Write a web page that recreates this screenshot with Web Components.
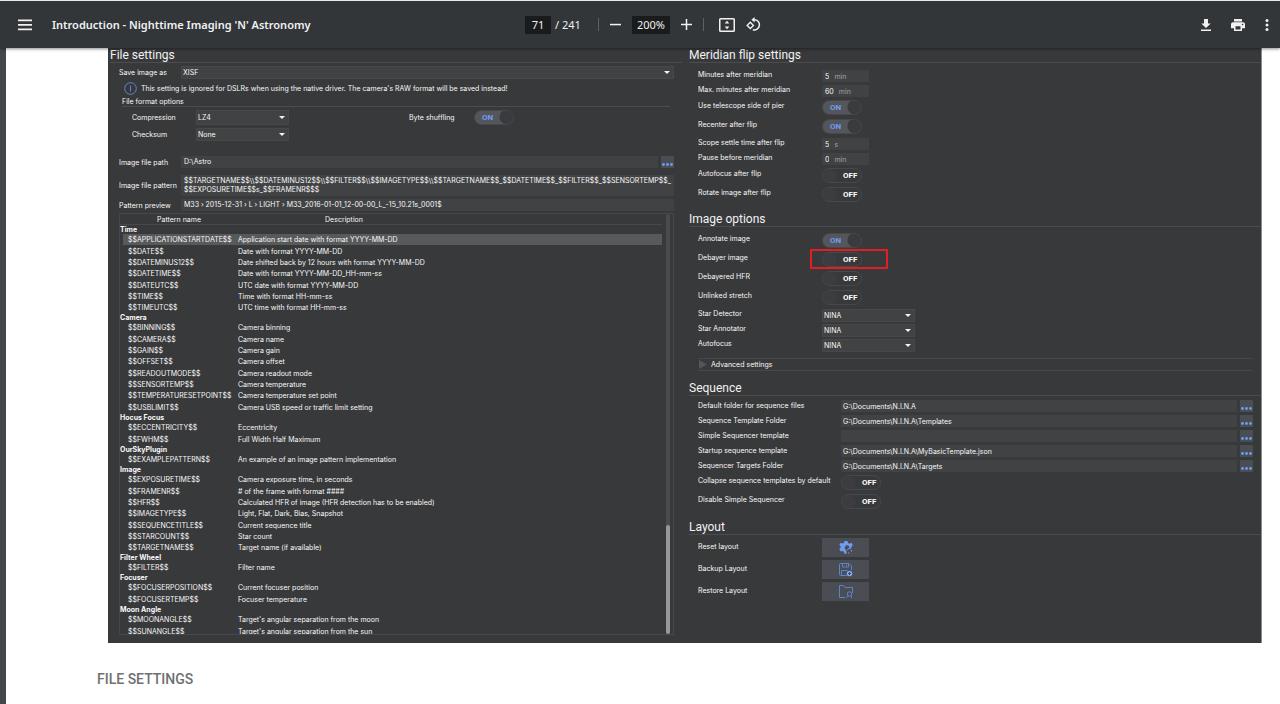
<!DOCTYPE html>
<html lang="en">
<head>
<meta charset="utf-8">
<title>Introduction - Nighttime Imaging 'N' Astronomy</title>
<style>
  html { background: #42474a; }
  body { margin: 0; font-family: Roboto, sans-serif; min-height: 100vh; }
</style>
</head>
<body>
<pdf-viewer></pdf-viewer>

<script>
const controlCss = `
  *, *::before, *::after { box-sizing: border-box; }
  input, select, textarea, button {
    font: inherit; color: inherit; border: 0; border-radius: 0; margin: 0; padding: 0;
    outline: 0; background: none; appearance: none; min-width: 0;
  }
  .box { background: #414244; }
  select.box { height: 13px; border: 1px solid #47484a; padding: 0 2px 0 1px; }
  .drop { display: grid; align-items: center; }
  .drop select { grid-area: 1 / 1; width: 100%; }
  .drop::after {
    content: ""; grid-area: 1 / 1; justify-self: end; margin-right: 4px; pointer-events: none;
    border: 3px solid transparent; border-top-color: #f2f2f2; border-bottom: 0;
  }
  .switch { display: grid; width: 40px; height: 15px; align-items: center; font: bold 8px/15px Roboto, sans-serif; }
  .switch input { grid-area: 1 / 1; width: 40px; height: 15px; border: 1px solid #47484c; border-radius: 8px;
    background: radial-gradient(circle at 7px 7px, #3c3d41 6px, transparent 7px); }
  .switch input:checked { background: radial-gradient(circle at 32px 6px, #3a3b3e 7px, #54565b 8px); }
  .switch span { grid-area: 1 / 1; pointer-events: none; padding-left: 21px; color: #fff; }
  .switch input:checked + span { padding-left: 8px; color: #6f9df2; }
  .more { width: 13px; height: 12px; background: #4b4d54; display: flex; align-items: end; justify-content: center; padding-bottom: 2px; }
`;
const dots = `<svg width="11" height="3" viewBox="0 0 11 3" fill="#6f9df2"><circle cx="1.5" cy="1.5" r="1.4"/><circle cx="5.5" cy="1.5" r="1.4"/><circle cx="9.5" cy="1.5" r="1.4"/></svg>`;

function define(name, render) {
  customElements.define(name, class extends HTMLElement {
    connectedCallback() {
      if (this.shadowRoot) return;
      this.attachShadow({ mode: 'open' }).innerHTML = render(this);
    }
  });
}

/* ---------- viewer toolbar ---------- */
define('viewer-toolbar', () => `
<style>
  :host { display: grid; grid-template-columns: 1fr auto 1fr; align-items: center; height: 48px;
    box-sizing: border-box; padding: 0 10px 0 18px; border-top: 1px solid #e8eaea; background: #323639;
    color: #f1f1f1; font-family: "Noto Sans", sans-serif; font-size: 11px; position: relative; z-index: 1;
    box-shadow: 0 1px 3px rgba(0,0,0,.45); }
  div { display: flex; align-items: center; }
  .left { gap: 20px; }
  .center { margin-right: 2px; }
  .right { justify-content: flex-end; gap: 14px; }
  .right :last-child { margin-left: 2px; }
  h1 { margin: 0; font: 600 11px/18px "Noto Sans", sans-serif; white-space: nowrap; }
  button { all: unset; display: flex; }
  svg { display: block; fill: #f1f1f1; }
  input { box-sizing: border-box; height: 18px; border: 0; padding: 0; background: #191b1c; color: inherit;
    font: inherit; text-align: center; }
  .page { width: 26px; } .zoom { width: 38px; }
  hr { border: 0; margin: 0; width: 1px; height: 13px; background: #5d6164; }
</style>
<div class="left">
  <button aria-label="Menu"><svg width="14" height="12" viewBox="0 0 14 12"><path d="M0 .5h14v1.8H0zM0 5h14v1.8H0zM0 9.500h14v1.800H0z"/></svg></button>
  <h1>Introduction - Nighttime Imaging 'N' Astronomy</h1>
</div>
<div class="center">
  <input class="page" aria-label="Page" value="71"><span style="margin:0 17px 0 4px">/ 241</span>
  <hr>
  <button aria-label="Zoom out" style="margin:0 11px"><svg width="11" height="11" viewBox="0 0 11 11"><path d="M0 4.800h11v1.500H0z"/></svg></button>
  <input class="zoom" aria-label="Zoom" value="200%">
  <button aria-label="Zoom in" style="margin:0 11px"><svg width="11" height="11" viewBox="0 0 11 11"><path d="M0 4.800h4.750V0h1.500v4.800H11v1.500H6.250V11h-1.500V6.300H0z"/></svg></button>
  <hr>
  <button aria-label="Fit to page" style="margin:0 11px 0 15px"><svg width="16" height="14" viewBox="0 0 16 14"><path d="M1.500 0h13A1.500 1.500 0 0 1 16 1.500v11a1.500 1.500 0 0 1-1.500 1.500h-13A1.500 1.500 0 0 1 0 12.500v-11A1.500 1.500 0 0 1 1.500 0zm0 1.500v11h13v-11zM8 2.800l2.300 2.700H5.700zM8 11.200L5.700 8.500h4.600z" fill-rule="evenodd"/></svg></button>
  <button aria-label="Rotate"><svg width="15" height="15" viewBox="0 0 15 15"><path fill-rule="evenodd" d="M4.300 4.300L.2 8.400l4.100 4 4.100-4zM2.100 8.400l2.200-2.200 2.200 2.200-2.200 2.100z"/><path d="M8.600 0L5.400 2.800l3.200 2.700z"/><path d="M8 2.750A5.100 5.100 0 1 1 6.800 12.700" fill="none" stroke="#f1f1f1" stroke-width="1.500"/></svg></button>
</div>
<div class="right">
  <button aria-label="Download"><svg width="16" height="16" viewBox="0 0 16 16"><path d="M6 2h4v4.500h2.700L8 11 3.300 6.500H6zM3 12.500h10V14H3z"/></svg></button>
  <button aria-label="Print"><svg width="16" height="16" viewBox="0 0 16 16"><path d="M4 2h8v2.500H4zM3 5.200h10a2 2 0 0 1 2 2v4h-3V14H4v-2.800H1v-4a2 2 0 0 1 2-2zM5.500 9.200v3.300h5V9.200zm7-2.500a.75.75 0 1 0 .1 0z" fill-rule="evenodd"/></svg></button>
  <button aria-label="More"><svg width="6" height="14" viewBox="0 0 6 14"><circle cx="3" cy="2.500" r="1.500"/><circle cx="3" cy="7" r="1.500"/><circle cx="3" cy="11.500" r="1.500"/></svg></button>
</div>`);

/* ---------- titled group of settings ---------- */
define('settings-section', el => `
<style>
  :host { display: block; }
  h2 { margin: 0; box-sizing: border-box; height: 15px; border-bottom: 1px solid #4b4c4e;
    font: 400 12px/15px Roboto, sans-serif; color: #f2f2f2; white-space: nowrap; }
  .body { padding-top: var(--inset, 4px); }
</style>
<h2>${el.getAttribute('heading')}</h2><div class="body"><slot></slot></div>`);

/* ---------- one labelled setting ---------- */
const icons = {
  reset: `<path fill="#6f9df2" fill-rule="evenodd" d="M5.500 0h3l.5 2 1.600.8 1.800-1 1.400 2.100-1.200 1.500.2 1.100-2.300.4A2.400 2.400 0 1 0 7.300 9l.3 3.700H5.500L5 10.700l-1.500-.8-1.800.6L.3 8.100 1.600 6.800V5.300L.3 4l1.400-2.300 1.800.8L5 1.700z"/><path fill="none" stroke="#6f9df2" d="M8.500 9a2 2 0 0 1 3.500-1M9 11.500l1.200 1M12.500 9v1.500"/>`,
  backup: `<g fill="none" stroke="#5d83c9"><path d="M8 12.500H1.500a1 1 0 0 1-1-1v-10a1 1 0 0 1 1-1H10L12.500 3v4M3.500.5v3.500h6V.5M2.500 12V7.500h6M7.500 1.500v1.500"/></g><circle cx="10.500" cy="10.500" r="2.800" fill="#7ba6f5"/><path stroke="#4b4d54" d="M10.500 9v3M9 10.500h3"/>`,
  restore: `<g fill="none" stroke="#5d83c9"><path d="M6 12.500H.5V.5h4l1.500 2h7.500V8"/><circle cx="10.500" cy="9" r="2.200"/><path d="M9 10.800L7.300 12.700M12.500 11v2"/></g>`
};
const controls = {
  number: el => `<span class="num box"><input id="c" value="${el.getAttribute('value')}" style="width:${el.getAttribute('value').length}ch"><i>${el.getAttribute('unit')}</i></span>`,
  toggle: el => `<span class="switch"><input type="checkbox" role="switch" id="c" ${el.hasAttribute('checked') ? 'checked' : ''}><span>${el.hasAttribute('checked') ? 'ON' : 'OFF'}</span></span>`,
  select: el => `<span class="drop"><select id="c" class="box"><option>${el.getAttribute('value')}</option></select></span>`,
  path: el => `<input id="c" class="path box" value="${el.getAttribute('value')}"><button class="more" aria-label="Browse">${dots}</button>`,
  action: el => `<button id="c" class="act"><svg width="14" height="14" viewBox="0 0 14 14">${icons[el.getAttribute('icon')]}</svg></button>`
};
define('setting-row', el => {
  const kind = el.getAttribute('kind');
  return `
<style>${controlCss}
  :host { display: flex; position: relative; padding: 0 8px 0 9px; }
  :host([kind=number]), :host([kind=path]), :host([kind=select]) { height: 15px; }
  :host([kind=toggle]) { height: 19px; }
  :host([kind=action]) { height: 22px; }
  label { flex: none; width: var(--label, 124px); line-height: 9px; white-space: nowrap; }
  :host([kind=toggle]) label, :host([kind=path]) label { line-height: 12px; }
  :host([kind=action]) label { line-height: 18px; }
  .num { display: flex; align-items: center; gap: 5px; width: 47px; height: 12px; padding-left: 3px; }
  .num i { font-style: normal; color: #a2a3a5; }
  .drop { width: 93px; height: 13px; }
  .path { flex: 1; height: 12px; padding: 0 2px; margin-right: 3px; }
  .act { width: 47px; height: 19px; background: #4b4d54; display: grid; place-items: center; }
  :host([flagged])::after { content: ""; position: absolute; left: 121px; top: -3px; width: 78px; height: 20px;
    box-sizing: border-box; border: 2px solid #e01f23; }
</style>
<label for="c"><slot></slot></label>${controls[kind](el)}`;
});

/* ---------- pattern table ---------- */
const patterns = [
  ['Time', [['APPLICATIONSTARTDATE', 'Application start date with format YYYY-MM-DD'], ['DATE', 'Date with format YYYY-MM-DD'],
    ['DATEMINUS12', 'Date shifted back by 12 hours with format YYYY-MM-DD'], ['DATETIME', 'Date with format YYYY-MM-DD_HH-mm-ss'],
    ['DATEUTC', 'UTC date with format YYYY-MM-DD'], ['TIME', 'Time with format HH-mm-ss'], ['TIMEUTC', 'UTC time with format HH-mm-ss']]],
  ['Camera', [['BINNING', 'Camera binning'], ['CAMERA', 'Camera name'], ['GAIN', 'Camera gain'], ['OFFSET', 'Camera offset'],
    ['READOUTMODE', 'Camera readout mode'], ['SENSORTEMP', 'Camera temperature'], ['TEMPERATURESETPOINT', 'Camera temperature set point'],
    ['USBLIMIT', 'Camera USB speed or traffic limit setting']]],
  ['Hocus Focus', [['ECCENTRICITY', 'Eccentricity'], ['FWHM', 'Full Width Half Maximum']]],
  ['OurSkyPlugin', [['EXAMPLEPATTERN', 'An example of an image pattern implementation']]],
  ['Image', [['EXPOSURETIME', 'Camera exposure time, in seconds'], ['FRAMENR', '# of the frame with format ####'],
    ['HFR', 'Calculated HFR of image (HFR detection has to be enabled)'], ['IMAGETYPE', 'Light, Flat, Dark, Bias, Snapshot'],
    ['SEQUENCETITLE', 'Current sequence title'], ['STARCOUNT', 'Star count'], ['TARGETNAME', 'Target name (if available)']]],
  ['Filter Wheel', [['FILTER', 'Filter name']]],
  ['Focuser', [['FOCUSERPOSITION', 'Current focuser position'], ['FOCUSERTEMP', 'Focuser temperature']]],
  ['Moon Angle', [['MOONANGLE', "Target's angular separation from the moon"], ['SUNANGLE', "Target's angular separation from the sun"]]]
];
define('pattern-table', () => `
<style>
  :host { display: flex; box-sizing: border-box; height: 422px; border: 1px solid #47484b; overflow: hidden; }
  .view { flex: 1; overflow: hidden; }
  table { width: 100%; border-collapse: collapse; table-layout: fixed; }
  th, td { padding: 0; line-height: 9px; text-align: left; white-space: nowrap; }
  thead th { height: 10px; text-align: center; font-weight: inherit; border-bottom: 1px solid #47484b; }
  thead th + th { padding-right: 212px; }
  .a { width: 118px; }
  tbody th { height: 9px; font-weight: 700; }
  td { height: 11px; }
  tr:nth-child(3n) td { height: 12px; }
  td:first-child { padding-left: 8px; }
  tr.on td { background: #58595b; }
  tr.on td:first-child { background: linear-gradient(90deg, transparent 3px, #58595b 3px); }
  .bar { flex: none; width: 4px; margin: 0 3px 0 4px; display: flex; flex-direction: column; border-radius: 2px; background: #4a4b51; }
  .thumb { margin-top: auto; height: 109px; border-radius: 2px; background: #97989b; }
</style>
<div class="view"><table>
<colgroup><col class="a"><col></colgroup>
<thead><tr><th>Pattern name</th><th>Description</th></tr></thead>
${patterns.map(([g, rows], i) => `<tbody><tr><th colspan="2">${g}</th></tr>${rows.map(([n, d], j) =>
  `<tr${i + j ? '' : ' class="on"'}><td>$$${n}$$</td><td>${d}</td></tr>`).join('')}</tbody>`).join('')}
</table></div>
<div class="bar"><div class="thumb"></div></div>`);

/* ---------- file settings form ---------- */
define('file-settings', () => `
<style>${controlCss}
  :host { display: block; padding: 0 8px 0 9px; }
  .row { display: grid; grid-template-columns: 62px minmax(0, 1fr); align-items: center; white-space: nowrap; }
  .row > input, .row > output { height: 12px; line-height: 12px; padding: 0 3px; }
  .path { grid-template-columns: 62px minmax(0, 1fr) 13px; margin-top: 15px; }
  .path input { margin-right: 3px; }
  .info { display: flex; align-items: center; gap: 4px; height: 16px; margin: 1px 0 0 5px; }
  fieldset { border: 0; margin: 0 4px 0 3px; padding: 0; min-width: 0; }
  legend { display: block; float: left; width: 100%; height: 11px; line-height: 11px; padding: 0; border-bottom: 1px solid #4b4c4e; margin-bottom: 3px; }
  .opts { clear: both; display: grid; grid-template-columns: 64px 93px 120px 65px auto; justify-content: start;
    align-items: center; row-gap: 3px; padding-left: 10px; }
  .opts select { height: 13px; }
  .opts .tall select { height: 15px; }
  .pattern { margin-top: 7px; }
  textarea { height: 21px; line-height: 9px; padding: 1px 3px; resize: none; overflow: hidden; white-space: pre; display: block; }
  .preview { margin-top: 3px; margin-bottom: 2px; }
</style>
<div class="row"><label for="fmt">Save image as</label><span class="drop"><select id="fmt" class="box"><option>XISF</option></select></span></div>
<div class="info"><svg width="13" height="13" viewBox="0 0 13 13" fill="none" stroke="#5f87cf"><circle cx="6.500" cy="6.500" r="5.800"/><path d="M6.500 3.500v6"/></svg><span>This setting is ignored for DSLRs when using the native driver. The camera's RAW format will be saved instead!</span></div>
<fieldset><legend>File format options</legend>
  <div class="opts">
    <label for="comp">Compression</label><span class="drop tall"><select id="comp" class="box"><option>LZ4</option></select></span>
    <span></span><label for="shuf">Byte shuffling</label><span class="switch"><input type="checkbox" role="switch" id="shuf" checked><span>ON</span></span>
    <label for="sum">Checksum</label><span class="drop"><select id="sum" class="box"><option>None</option></select></span>
  </div>
</fieldset>
<div class="row path"><label for="dir">Image file path</label><input id="dir" class="box" value="D:\\Astro"><button class="more" aria-label="Browse">${dots}</button></div>
<div class="row pattern"><label for="pat">Image file pattern</label><textarea id="pat" class="box">$$TARGETNAME$$\\\\$$DATEMINUS12$$\\\\$$FILTER$$\\\\$$IMAGETYPE$$\\\\$$TARGETNAME$$_$$DATETIME$$_$$FILTER$$_$$SENSORTEMP$$_
$$EXPOSURETIME$$s_$$FRAMENR$$$</textarea></div>
<div class="row preview"><label for="prev">Pattern preview</label><output id="prev" class="box">M33 › 2015-12-31 › L › LIGHT › M33_2016-01-01_12-00-00_L_-15_10.21s_0001$</output></div>
<pattern-table></pattern-table>`);

/* ---------- collapsed settings group ---------- */
define('advanced-expander', () => `
<style>
  :host { display: block; margin: 4px 8px 0 9px; }
  details { border: solid #47484b; border-width: 1px 0; }
  summary { display: flex; align-items: center; gap: 4px; height: 11px; list-style: none; padding-left: 1px; }
  svg { display: block; }
</style>
<details><summary><svg width="8" height="9" viewBox="0 0 8 9"><path fill="#55565b" d="M0 0l8 4.500L0 9z"/></svg><slot></slot></summary></details>`);

/* ---------- options panel ---------- */
define('options-panel', () => `
<style>
  :host { display: grid; grid-template-columns: minmax(0, 1fr) minmax(0, 1fr); column-gap: 7px; box-sizing: border-box;
    padding: 0 0 8px 2px; background: #38393b; color: #f8f8f8; border-right: 1px solid #8b8c8e;
    font-family: Inter, sans-serif; font-size: 7px; font-weight: 400; }
  .image { --inset: 6px; margin-top: 6px; }
  .meridian { --inset: 7px; }
  .files { --inset: 3px; }
  .sequence { --label: 143px; margin-top: 10px; }
  .layout { --inset: 3px; margin-top: 7px; }
</style>
<settings-section class="files" heading="File settings"><file-settings></file-settings></settings-section>
<div>
  <settings-section class="meridian" heading="Meridian flip settings">
    <setting-row kind="number" value="5" unit="min">Minutes after meridian</setting-row>
    <setting-row kind="number" value="60" unit="min">Max. minutes after meridian</setting-row>
    <setting-row kind="toggle" checked>Use telescope side of pier</setting-row>
    <setting-row kind="toggle" checked>Recenter after flip</setting-row>
    <setting-row kind="number" value="5" unit="s">Scope settle time after flip</setting-row>
    <setting-row kind="number" value="0" unit="min">Pause before meridian</setting-row>
    <setting-row kind="toggle">Autofocus after flip</setting-row>
    <setting-row kind="toggle">Rotate image after flip</setting-row>
  </settings-section>
  <settings-section class="image" heading="Image options">
    <setting-row kind="toggle" checked>Annotate image</setting-row>
    <setting-row kind="toggle" flagged>Debayer image</setting-row>
    <setting-row kind="toggle">Debayered HFR</setting-row>
    <setting-row kind="toggle">Unlinked stretch</setting-row>
    <setting-row kind="select" value="NINA">Star Detector</setting-row>
    <setting-row kind="select" value="NINA">Star Annotator</setting-row>
    <setting-row kind="select" value="NINA">Autofocus</setting-row>
    <advanced-expander>Advanced settings</advanced-expander>
  </settings-section>
  <settings-section class="sequence" heading="Sequence">
    <setting-row kind="path" value="G:\\Documents\\N.I.N.A">Default folder for sequence files</setting-row>
    <setting-row kind="path" value="G:\\Documents\\N.I.N.A\\Templates">Sequence Template Folder</setting-row>
    <setting-row kind="path" value="">Simple Sequencer template</setting-row>
    <setting-row kind="path" value="G:\\Documents\\N.I.N.A\\MyBasicTemplate.json">Startup sequence template</setting-row>
    <setting-row kind="path" value="G:\\Documents\\N.I.N.A\\Targets">Sequencer Targets Folder</setting-row>
    <setting-row kind="toggle">Collapse sequence templates by default</setting-row>
    <setting-row kind="toggle">Disable Simple Sequencer</setting-row>
  </settings-section>
  <settings-section class="layout" heading="Layout">
    <setting-row kind="action" icon="reset">Reset layout</setting-row>
    <setting-row kind="action" icon="backup">Backup Layout</setting-row>
    <setting-row kind="action" icon="restore">Restore Layout</setting-row>
  </settings-section>
</div>`);

/* ---------- whole viewer ---------- */
define('pdf-viewer', () => `
<style>
  :host { display: flex; flex-direction: column; min-height: 100vh; }
  main { flex: 1; margin-left: 6px; background: #fff; }
  options-panel { margin: 0 18px 0 102px; }
  h2 { margin: 26px 0 0 91px; font: 500 14px/20px Roboto, sans-serif; color: #6f7072; }
</style>
<viewer-toolbar></viewer-toolbar>
<main><options-panel></options-panel><h2>FILE SETTINGS</h2></main>`);
</script>
</body>
</html>
